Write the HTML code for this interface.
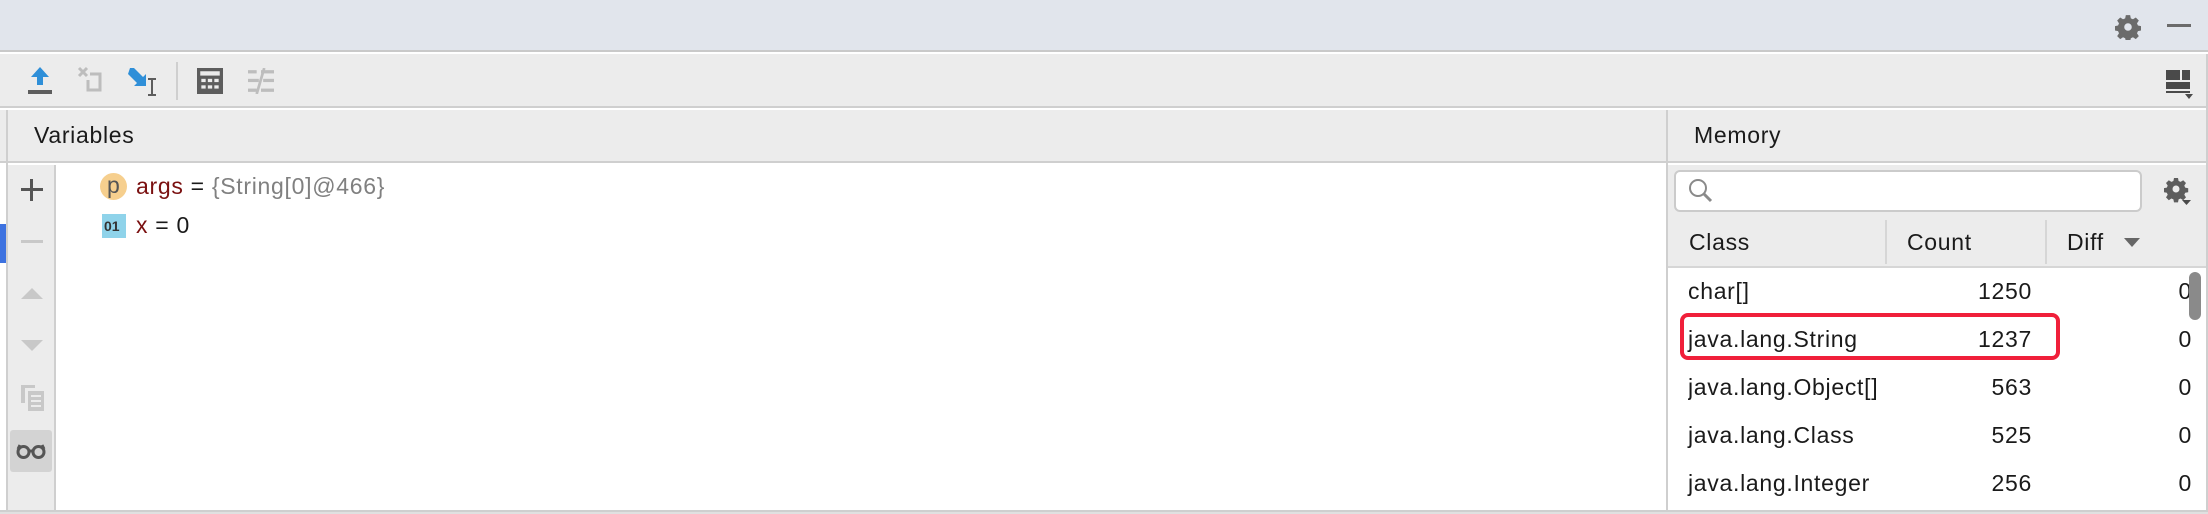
<!DOCTYPE html>
<html><head><meta charset="utf-8"><style>
*{margin:0;padding:0;box-sizing:border-box}
body{width:2208px;height:514px;position:relative;overflow:hidden;background:#fff;font-family:"Liberation Sans",sans-serif;color:#1a1a1a}
.a{position:absolute}
.t{font-size:23px;letter-spacing:0.7px;white-space:nowrap}
</style></head><body>
<div class="a" style="left:0;top:0;width:2208px;height:52px;background:#e1e5ec;border-bottom:2px solid #c9c9c9"></div>
<div class="a" style="left:0;top:54px;width:2208px;height:54px;background:#ececec;border-bottom:2px solid #cfcfcf"></div>
<svg class="a" style="left:2115px;top:14px" width="26" height="26" viewBox="0 0 24 24"><path fill="#6b6b6b" d="M10 1h4l.6 3 2 .9 2.6-1.7 2.8 2.8-1.7 2.6.9 2 3 .6v4l-3 .6-.9 2 1.7 2.6-2.8 2.8-2.6-1.7-2 .9-.6 3h-4l-.6-3-2-.9-2.6 1.7-2.8-2.8 1.7-2.6-.9-2-3-.6v-4l3-.6.9-2-1.7-2.6 2.8-2.8 2.6 1.7 2-.9zM12 8.5a3.5 3.5 0 100 7 3.5 3.5 0 000-7z"/></svg>
<div class="a" style="left:2167px;top:24px;width:24px;height:3px;background:#6b6b6b"></div>
<svg class="a" style="left:26px;top:64px" width="28" height="32" viewBox="0 0 28 32"><path fill="#2f8fd8" d="M14 3l9 10h-6v8h-6v-8H5z"/><rect x="2" y="26" width="24" height="4" fill="#5d5d5d"/></svg>
<svg class="a" style="left:77px;top:66px" width="26" height="28" viewBox="0 0 26 28"><g stroke="#bdbdbd" stroke-width="3" fill="none"><path d="M2 2l8 8M10 2l-8 8"/><path d="M13 8h10v16H11V14"/></g></svg>
<svg class="a" style="left:128px;top:66px" width="32" height="32" viewBox="0 0 32 32"><path fill="#2f8fd8" d="M2 2l4-0 9 9 3-3v12H6l3-3-9-9z"/><path stroke="#5d5d5d" stroke-width="2" fill="none" d="M20 13h8M24 13v16M20 29h8"/></svg>
<div class="a" style="left:176px;top:62px;width:2px;height:38px;background:#cfcfcf"></div>
<svg class="a" style="left:197px;top:68px" width="26" height="26" viewBox="0 0 24 24"><rect width="24" height="24" fill="#5d5d5d"/><rect x="3" y="3" width="18" height="4" fill="#ececec"/><g fill="#ececec"><rect x="4" y="10" width="4" height="3"/><rect x="10" y="10" width="4" height="3"/><rect x="16" y="10" width="4" height="3"/><rect x="4" y="16" width="4" height="3"/><rect x="10" y="16" width="4" height="3"/><rect x="16" y="16" width="4" height="3"/></g></svg>
<svg class="a" style="left:248px;top:68px" width="26" height="26" viewBox="0 0 24 24"><g fill="#bdbdbd"><rect x="0" y="2" width="8" height="3"/><rect x="12" y="2" width="12" height="3"/><rect x="0" y="10" width="10" height="3"/><rect x="14" y="10" width="10" height="3"/><rect x="0" y="19" width="8" height="3"/><rect x="12" y="19" width="12" height="3"/></g><path d="M15 0L8 24" stroke="#bdbdbd" stroke-width="2.5"/></svg>
<svg class="a" style="left:2166px;top:70px" width="28" height="30" viewBox="0 0 28 30"><g fill="#4a4a4a"><rect x="0" y="0" width="14" height="10"/><rect x="16" y="0" width="8" height="10"/><rect x="0" y="12" width="24" height="7"/><rect x="0" y="21" width="24" height="2"/></g><path d="M19 24h8l-4 5z" fill="#4a4a4a"/></svg>
<div class="a" style="left:0;top:110px;width:2208px;height:53px;background:#ececec;border-bottom:2px solid #cfcfcf"></div>
<div class="a" style="left:6px;top:110px;width:2px;height:404px;background:#cfcfcf"></div>
<div class="a t" style="left:34px;top:122px">Variables</div>
<div class="a" style="left:1666px;top:110px;width:2px;height:404px;background:#cfcfcf"></div>
<div class="a t" style="left:1694px;top:122px">Memory</div>
<div class="a" style="left:2206px;top:54px;width:2px;height:460px;background:#cfcfcf"></div>
<div class="a" style="left:0;top:165px;width:6px;height:349px;background:#fff"></div>
<div class="a" style="left:0;top:224px;width:6px;height:39px;background:#3d72e0"></div>
<div class="a" style="left:8px;top:165px;width:48px;height:347px;background:#ececec;border-right:2px solid #cfcfcf"></div>
<div class="a" style="left:21px;top:188px;width:22px;height:3px;background:#555"></div>
<div class="a" style="left:30px;top:179px;width:3px;height:22px;background:#555"></div>
<div class="a" style="left:21px;top:240px;width:22px;height:3px;background:#c8c8c8"></div>
<div class="a" style="left:21px;top:288px;width:0;height:0;border-left:11px solid transparent;border-right:11px solid transparent;border-bottom:11px solid #c8c8c8"></div>
<div class="a" style="left:21px;top:340px;width:0;height:0;border-left:11px solid transparent;border-right:11px solid transparent;border-top:11px solid #c8c8c8"></div>
<svg class="a" style="left:21px;top:385px" width="24" height="26" viewBox="0 0 24 26"><g fill="#c8c8c8"><rect x="0" y="0" width="4" height="18"/><rect x="0" y="0" width="14" height="3"/><rect x="7" y="6" width="16" height="20"/></g><g fill="#ececec"><rect x="10" y="10" width="10" height="2"/><rect x="10" y="15" width="10" height="2"/><rect x="10" y="20" width="10" height="2"/></g></svg>
<div class="a" style="left:10px;top:430px;width:42px;height:42px;background:#d3d3d3;border-radius:3px"></div>
<svg class="a" style="left:16px;top:443px" width="30" height="16" viewBox="0 0 30 16"><g fill="none" stroke="#555" stroke-width="3"><circle cx="7.5" cy="9" r="5.5"/><circle cx="22.5" cy="9" r="5.5"/><path d="M13 8h4M2 6l2-4M28 6l-2-4"/></g></svg>
<div class="a" style="left:100px;top:173px;width:27px;height:27px;border-radius:50%;background:#f6cf8e"></div>
<div class="a t" style="left:107px;top:172px;color:#555">p</div>
<div class="a t" style="left:136px;top:173px"><span style="color:#7a1010">args</span> = <span style="color:#808080">{String[0]@466}</span></div>
<div class="a" style="left:102px;top:214px;width:24px;height:24px;background:#8fd3ea"></div>
<div class="a" style="left:104px;top:218px;font-size:14px;font-weight:bold;color:#333">01</div>
<div class="a t" style="left:136px;top:212px"><span style="color:#7a1010">x</span> = 0</div>
<div class="a" style="left:1668px;top:165px;width:538px;height:53px;background:#ececec"></div>
<div class="a" style="left:1674px;top:170px;width:468px;height:42px;background:#fff;border:2px solid #cbcbcb;border-radius:6px"></div>
<svg class="a" style="left:1688px;top:178px" width="26" height="26" viewBox="0 0 26 26"><circle cx="10" cy="10" r="8" fill="none" stroke="#8a8a8a" stroke-width="2"/><path d="M16 16l7 7" stroke="#8a8a8a" stroke-width="3"/></svg>
<svg class="a" style="left:2164px;top:177px" width="28" height="30" viewBox="0 0 28 30"><path fill="#5d5d5d" d="M10 1h4l.6 3 2 .9 2.6-1.7 2.8 2.8-1.7 2.6.9 2 3 .6v4l-3 .6-.9 2 1.7 2.6-2.8 2.8-2.6-1.7-2 .9-.6 3h-4l-.6-3-2-.9-2.6 1.7-2.8-2.8 1.7-2.6-.9-2-3-.6v-4l3-.6.9-2-1.7-2.6 2.8-2.8 2.6 1.7 2-.9zM12 8.5a3.5 3.5 0 100 7 3.5 3.5 0 000-7z"/><path d="M18 23h9l-4.5 5z" fill="#4a4a4a"/></svg>
<div class="a" style="left:1668px;top:218px;width:538px;height:50px;background:#ececec;border-bottom:2px solid #d6d6d6"></div>
<div class="a" style="left:1885px;top:220px;width:2px;height:44px;background:#d6d6d6"></div>
<div class="a" style="left:2045px;top:220px;width:2px;height:44px;background:#d6d6d6"></div>
<div class="a t" style="left:1689px;top:229px">Class</div>
<div class="a t" style="left:1907px;top:229px">Count</div>
<div class="a t" style="left:2067px;top:229px">Diff</div>
<div class="a" style="left:2124px;top:238px;border-left:8px solid transparent;border-right:8px solid transparent;border-top:9px solid #666"></div>
<div class="a" style="left:1680px;top:313px;width:380px;height:47px;border:4px solid #f0203a;border-radius:8px"></div>
<div class="a t" style="left:1688px;top:278px">char[]</div><div class="a t" style="left:1900px;width:132px;text-align:right;top:278px">1250</div><div class="a t" style="left:2170px;width:22px;text-align:right;top:278px">0</div>
<div class="a t" style="left:1688px;top:326px">java.lang.String</div><div class="a t" style="left:1900px;width:132px;text-align:right;top:326px">1237</div><div class="a t" style="left:2170px;width:22px;text-align:right;top:326px">0</div>
<div class="a t" style="left:1688px;top:374px;width:196px;overflow:hidden">java.lang.Object[]</div><div class="a t" style="left:1900px;width:132px;text-align:right;top:374px">563</div><div class="a t" style="left:2170px;width:22px;text-align:right;top:374px">0</div>
<div class="a t" style="left:1688px;top:422px">java.lang.Class</div><div class="a t" style="left:1900px;width:132px;text-align:right;top:422px">525</div><div class="a t" style="left:2170px;width:22px;text-align:right;top:422px">0</div>
<div class="a t" style="left:1688px;top:470px">java.lang.Integer</div><div class="a t" style="left:1900px;width:132px;text-align:right;top:470px">256</div><div class="a t" style="left:2170px;width:22px;text-align:right;top:470px">0</div>
<div class="a" style="left:2189px;top:272px;width:12px;height:48px;background:#8a8a8a;border-radius:6px"></div>
<div class="a" style="left:0;top:510px;width:2208px;height:4px;background:#e0e0e0;border-top:2px solid #cfcfcf"></div>
</body></html>
